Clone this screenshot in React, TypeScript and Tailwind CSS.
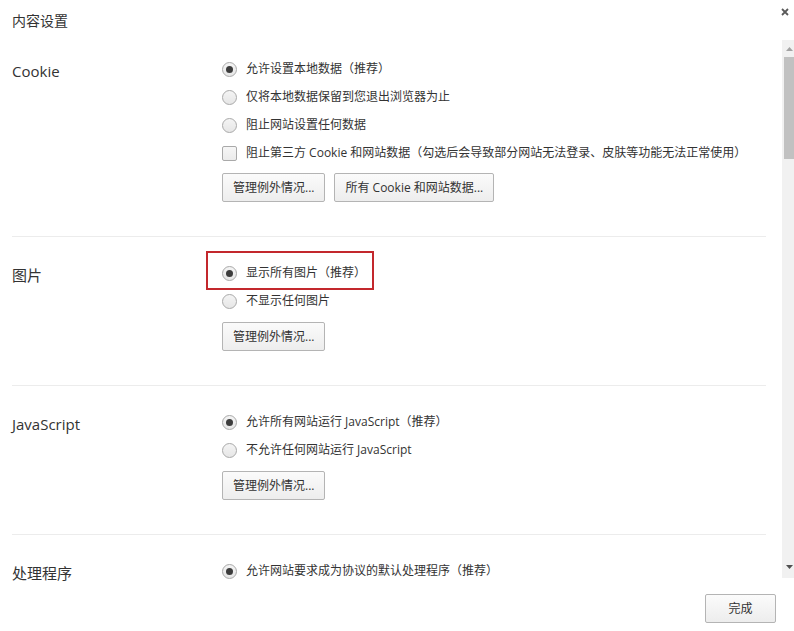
import React from "react";

const cjk = { fontFamily: '"Open Sans", "Noto Sans CJK SC", sans-serif' };

function Radio({ checked, label }: { checked?: boolean; label: string }) {
  return (
    <div className="flex h-[28px] items-center">
      <span className="flex h-[15px] w-[15px] items-center justify-center rounded-full border border-[#a9a9a9] bg-gradient-to-b from-[#f4f4f4] to-[#e6e6e6]">
        {checked && <span className="h-[7px] w-[7px] rounded-full bg-[#3c3c3c]" />}
      </span>
      <span className="ml-[9px] text-[12px] text-[#333]">{label}</span>
    </div>
  );
}

function Checkbox({ label }: { label: string }) {
  return (
    <div className="flex h-[28px] items-center">
      <span className="h-[15px] w-[15px] rounded-[2px] border border-[#a9a9a9] bg-gradient-to-b from-[#f6f6f6] to-[#ebebeb]" />
      <span className="ml-[9px] text-[12px] text-[#333]">{label}</span>
    </div>
  );
}

function Btn({ children, className = "" }: { children: React.ReactNode; className?: string }) {
  return (
    <button
      className={`h-[29px] rounded-[2px] border border-[#b4b4b4] bg-gradient-to-b from-[#fbfbfb] to-[#ededed] px-[10px] text-[12px] text-[#333] ${className}`}
    >
      {children}
    </button>
  );
}

function Section({
  label,
  first,
  children,
}: {
  label: string;
  first?: boolean;
  children: React.ReactNode;
}) {
  return (
    <div className={first ? "flex pt-[15px] pb-[34px]" : "flex border-t border-[#ececec] pt-[22px] pb-[34px]"}>
      <div className="mt-[8px] flex h-[16px] w-[210px] shrink-0 items-center text-[15px] leading-none text-[#333]">{label}</div>
      <div className="flex flex-col">{children}</div>
    </div>
  );
}

export default function App() {
  return (
    <div className="relative flex h-[631px] w-[794px] flex-col overflow-hidden bg-white" style={cjk}>
      <div className="flex h-[40px] shrink-0 items-center pl-[12px] text-[14px] text-[#333]">内容设置</div>
      <svg className="absolute left-[781px] top-[8px]" width="8" height="8" viewBox="0 0 8 8">
        <path d="M1 1 L7 7 M7 1 L1 7" stroke="#5a5a5a" strokeWidth="1.8" />
      </svg>

      <div className="flex h-[543px] shrink-0">
        <div className="flex-1 overflow-hidden pl-[12px] pr-[16px]">
          <Section label="Cookie" first>
            <Radio checked label="允许设置本地数据（推荐）" />
            <Radio label="仅将本地数据保留到您退出浏览器为止" />
            <Radio label="阻止网站设置任何数据" />
            <Checkbox label="阻止第三方 Cookie 和网站数据（勾选后会导致部分网站无法登录、皮肤等功能无法正常使用）" />
            <div className="mt-[6px] flex gap-[9px]">
              <Btn>管理例外情况...</Btn>
              <Btn>所有 Cookie 和网站数据...</Btn>
            </div>
          </Section>
          <Section label="图片">
            <Radio checked label="显示所有图片（推荐）" />
            <Radio label="不显示任何图片" />
            <div className="mt-[7px] flex">
              <Btn>管理例外情况...</Btn>
            </div>
          </Section>
          <Section label="JavaScript">
            <Radio checked label="允许所有网站运行 JavaScript（推荐）" />
            <Radio label="不允许任何网站运行 JavaScript" />
            <div className="mt-[7px] flex">
              <Btn>管理例外情况...</Btn>
            </div>
          </Section>
          <Section label="处理程序">
            <Radio checked label="允许网站要求成为协议的默认处理程序（推荐）" />
          </Section>
        </div>

        {/* scrollbar */}
        <div className="mb-[5px] flex w-[12px] shrink-0 flex-col bg-[#f1f1f1]">
          <div className="flex h-[17px] items-center justify-center pl-[2px]">
            <svg width="7" height="4" viewBox="0 0 7 4">
              <path d="M0 4 L3.5 0 L7 4 Z" fill="#a3a3a3" />
            </svg>
          </div>
          <div className="ml-[2px] h-[102px] bg-[#c1c1c1]" />
          <div className="flex-1" />
          <div className="flex h-[14px] items-start justify-center pl-[2px] pt-[1px]">
            <svg width="7" height="4" viewBox="0 0 7 4">
              <path d="M0 0 L3.5 4 L7 0 Z" fill="#505050" />
            </svg>
          </div>
        </div>
      </div>

      <div className="flex flex-1 items-start justify-end pr-[18px] pt-[11px]">
        <Btn className="w-[71px]">完成</Btn>
      </div>

      {/* annotation highlight */}
      <div className="absolute left-[206px] top-[251px] h-[39px] w-[168px] border-2 border-[#c3282d]" />
    </div>
  );
}
